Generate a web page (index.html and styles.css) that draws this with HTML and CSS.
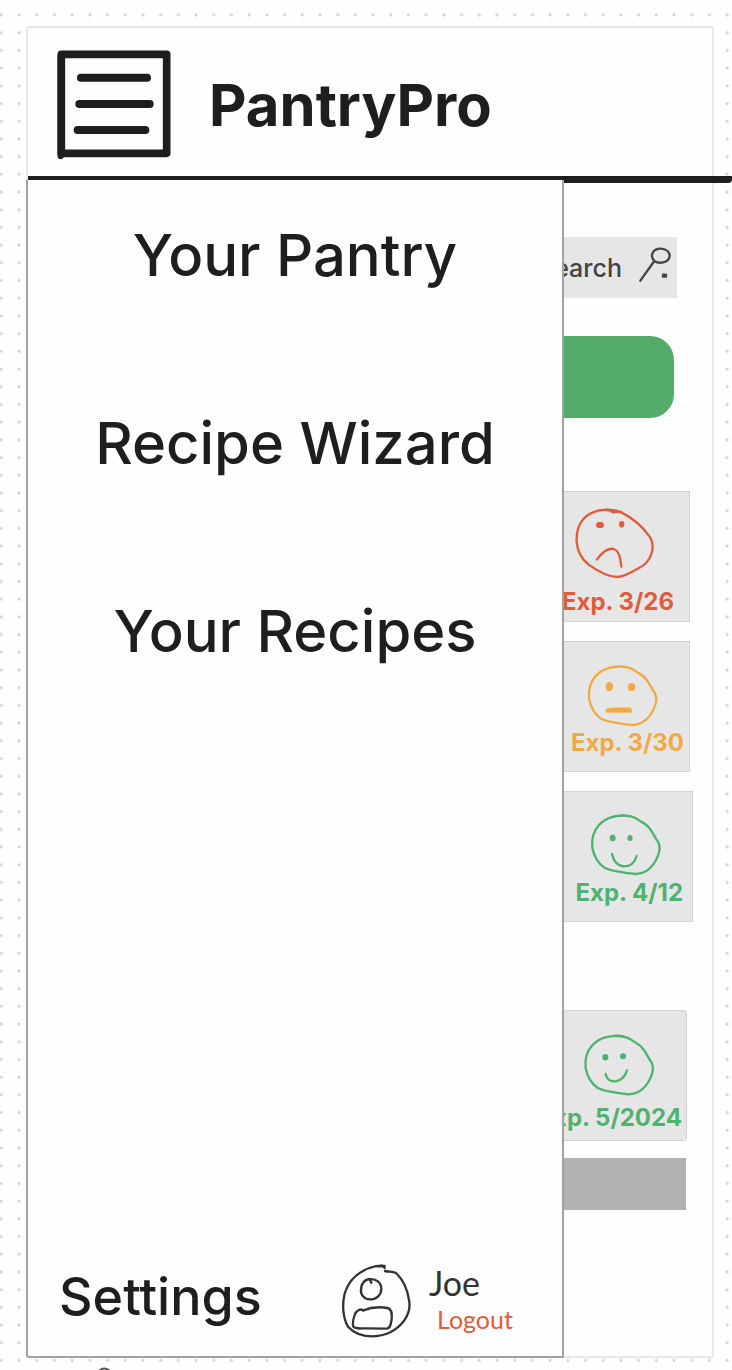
FILE: index.html
```html
<!DOCTYPE html>
<html lang="en">
<head>
<meta charset="utf-8">
<meta name="viewport" content="width=device-width, initial-scale=1">
<title>PantryPro</title>
<link rel="stylesheet" href="styles.css">
</head>
<body>
<div class="board">
  <div class="frame">
    <header class="header">
      <button class="menu-button" type="button" aria-label="Menu" aria-expanded="true">
        <svg viewBox="168 147 348 336" width="116" height="112" aria-hidden="true">
          <path d="M184 163H500V460H184Z" stroke-width="23"/>
          <path d="M182 170V468" stroke-width="19"/>
          <path d="M243 233H441M238 312H449M233 390H436" stroke-width="24"/>
        </svg>
      </button>
      <h1 class="brand">PantryPro</h1>
    </header>

    <main class="main">
      <label class="search">
        <input class="search-input" type="text" placeholder="Search">
        <svg viewBox="290 75 108 120" width="36" height="40" aria-hidden="true">
          <path d="M342 123C328 108 336 88 358 86C378 85 391 97 387 112C382 128 357 133 342 123L300 182"/>
          <path d="M368 164H377V170H368Z"/>
        </svg>
      </label>
      <button class="action" type="button" aria-label="Add"></button>

      <ul class="cards">
        <li class="card card-expired">
          <svg viewBox="39 36 378 282" width="126" height="94" aria-hidden="true">
            <path d="M213 95L190 97L178 91C145 85 112 101 97 121C80 143 79 165 80 185C82 213 95 238 116 254C141 272 176 291 202 291C226 290 244 276 267 264C291 252 299 237 304 222C311 200 309 185 299 170C278 141 246 113 215 98C199 90 187 88 168 89"/>
            <path d="M141 238C158 215 175 203 191 207C208 212 211 235 214 260"/>
            <ellipse class="fill" cx="150" cy="135" rx="12" ry="10"/>
            <ellipse class="fill" cx="215" cy="133" rx="8" ry="10"/>
          </svg>
          <span class="exp">Exp. 3/26</span>
        </li>
        <li class="card card-soon">
          <svg viewBox="39 36 378 255" width="126" height="85" aria-hidden="true">
            <path d="M225 111C190 105 157 117 137 138C119 158 115 181 117 206C121 228 134 252 153 266C174 277 213 281 246 285C275 284 296 267 310 239C319 221 322 205 315 190C306 178 300 163 290 150C279 132 265 131 253 121C238 112 217 108 199 110"/>
            <path d="M171 241C184 235 225 238 240 237M171 243L242 244" stroke-width="9"/>
            <ellipse class="fill" cx="178" cy="170" rx="11" ry="14"/>
            <ellipse class="fill" cx="245" cy="171" rx="11" ry="12"/>
          </svg>
          <span class="exp">Exp. 3/30</span>
        </li>
        <li class="card card-fresh">
          <svg viewBox="48 39 378 255" width="126" height="85" aria-hidden="true">
            <path d="M235 111C200 105 167 117 147 138C129 158 124 181 127 206C131 228 144 252 163 266C184 277 223 281 256 285C285 284 306 267 320 239C329 221 332 205 325 190C316 178 310 163 300 150C289 132 275 131 263 121C248 112 227 108 209 110"/>
            <path d="M186 225C191 247 204 261 223 262C243 262 255 248 260 231"/>
            <ellipse class="fill" cx="188" cy="177" rx="9" ry="10"/>
            <ellipse class="fill" cx="240" cy="177" rx="8" ry="9"/>
          </svg>
          <span class="exp">Exp. 4/12</span>
        </li>
        <li class="card card-stocked">
          <svg viewBox="30 33 378 273" width="126" height="91" aria-hidden="true">
            <path d="M215 109C180 103 147 115 127 136C109 156 104 179 107 204C111 226 124 250 143 264C164 275 203 279 236 283C265 282 286 265 300 237C309 219 312 203 305 188C296 176 290 161 280 148C269 130 255 129 243 119C228 110 207 106 189 108"/>
            <path d="M167 222C170 239 184 245 196 244C215 242 225 229 231 211"/>
            <ellipse class="fill" cx="166" cy="172" rx="9" ry="10"/>
            <ellipse class="fill" cx="219" cy="169" rx="9" ry="9"/>
          </svg>
          <span class="exp">Exp. 5/2024</span>
        </li>
      </ul>
      <div class="bar"></div>
    </main>

    <aside class="drawer">
      <nav class="nav">
        <a class="nav-link" href="#pantry">Your Pantry</a>
        <a class="nav-link" href="#wizard">Recipe Wizard</a>
        <a class="nav-link" href="#recipes">Your Recipes</a>
      </nav>
      <div class="account">
        <a class="settings" href="#settings">Settings</a>
        <svg class="avatar" viewBox="60 69 216 228" width="72" height="76" aria-hidden="true">
          <path d="M194 84L188 77C174 76 160 80 148 84C110 98 85 125 74 161C65 196 70 236 84 260C102 280 130 289 159 289C201 287 233 268 253 241C268 220 271 200 267 180C262 145 247 117 228 99C217 94 207 96 195 93M194 78L171 79"/>
          <path d="M154 128L148 117C132 120 124 132 123 148C121 165 133 178 151 178C170 178 184 164 184 147C184 128 168 115 148 118"/>
          <path d="M130 212C122 203 107 213 104 225C100 237 97 251 100 260C108 268 119 265 136 265L200 266C211 266 212 253 215 238C217 220 216 207 202 204C180 200 150 203 130 211"/>
        </svg>
        <div class="user">
          <span class="user-name">Joe</span>
          <a class="logout" href="#logout">Logout</a>
        </div>
      </div>
    </aside>
  </div>
  <svg class="scribble" viewBox="0 0 12 12" width="12" height="12" aria-hidden="true">
    <path d="M1 12Q5 9 10 12"/>
  </svg>
</div>
</body>
</html>
```
FILE: styles.css
```css
* {
  box-sizing: border-box;
}

body {
  margin: 0;
  background: #fefefe;
  color: #1e1e1e;
  font-family: Inter, "Liberation Sans", sans-serif;
}

a {
  color: inherit;
  text-decoration: none;
}

button {
  padding: 0;
  border: 0;
  background: none;
  color: inherit;
}

svg {
  display: block;
  flex: none;
  fill: none;
  stroke: currentColor;
  stroke-linecap: round;
  stroke-linejoin: round;
}

/* dotted canvas around the phone frame */
.board {
  display: flex;
  flex-direction: column;
  min-height: 100vh;
  overflow: hidden;
  padding: 26px 18px 0 26px;
  background-image: radial-gradient(circle at 2px 2px, #d2d2d2 1px, transparent 2px);
  background-origin: content-box;
  background-position: -9px -13px;
  background-size: calc((100% + 38px) / 41) calc((100% + 2px) / 76);
}

.frame {
  position: relative;
  display: flex;
  flex: 1;
  flex-direction: column;
  border: 2px solid #e8e8e8;
  border-radius: 3px;
  background: #fefefe;
}

.header {
  display: flex;
  align-items: center;
  gap: 37px;
  height: 155px;
  margin-right: -20px;
  padding: 6px 0 0 28px;
  border-bottom: 7px solid #1e1e1e;
  border-radius: 0 0 4px 4px;
}

.brand {
  margin: 0;
  font-size: 58px;
  font-weight: 700;
  line-height: 72px;
}

.main {
  display: flex;
  flex-direction: column;
  padding: 54px 0 0 35px;
}

.search {
  display: flex;
  align-items: center;
  justify-content: flex-end;
  gap: 13px;
  height: 61px;
  margin-right: 35px;
  padding: 0 4px;
  background: #e6e6e6;
  color: #444;
}

.search svg {
  margin-bottom: 6px;
  stroke-width: 7;
}

.search-input {
  width: 86px;
  padding: 0;
  border: 0;
  background: none;
  font: 500 25px/32px Inter, "Liberation Sans", sans-serif;
}

.search-input::placeholder {
  color: #444;
  opacity: 1;
}

.action {
  height: 82px;
  margin: 38px 38px 0 0;
  border-radius: 24px;
  background: #52ab67;
}

.cards {
  display: flex;
  flex-direction: column;
  gap: 19px;
  margin: 73px 0 0;
  padding: 0;
  list-style: none;
}

.card {
  display: flex;
  flex-direction: column;
  align-items: flex-end;
  height: 131px;
  margin-right: 22px;
  border: 1px solid #d2d2d2;
  background: #e6e6e6;
}

.card svg {
  stroke-width: 7;
}

.card .fill {
  fill: currentColor;
  stroke: none;
}

.exp {
  padding-right: 5px;
  font-size: 24px;
  font-weight: 700;
  line-height: 32px;
}

.card-expired {
  color: #e25b3a;
}

.card-expired .exp {
  padding-right: 15px;
}

.card-soon {
  color: #f2a942;
}

.card-fresh,
.card-stocked {
  color: #4eb36f;
}

.card-fresh {
  margin-right: 19px;
}

.card-fresh .exp {
  padding-right: 9px;
}

.card-stocked {
  margin: 69px 25px 0 0;
  border-radius: 3px;
}

.card-stocked .exp {
  padding-right: 4px;
}

.bar {
  height: 52px;
  margin: 17px 26px 0 0;
  background: #b2b2b2;
}

/* open menu, lying over the page */
.drawer {
  position: absolute;
  top: 152px;
  bottom: -2px;
  left: -2px;
  display: flex;
  flex-direction: column;
  justify-content: space-between;
  width: calc(100% - 146px);
  border: 2px solid #a2a2a2;
  border-top: 0;
  border-bottom-left-radius: 3px;
  background: #fefefe;
}

.nav {
  display: flex;
  flex-direction: column;
  align-items: center;
  gap: 116px;
  padding-top: 39px;
}

.nav-link {
  font-size: 58px;
  font-weight: 500;
  line-height: 72px;
}

.account {
  display: flex;
  align-items: center;
  padding: 0 0 17px 31px;
}

.settings {
  padding-bottom: 8px;
  font-size: 52px;
  font-weight: 500;
  line-height: 64px;
}

.avatar {
  margin-left: auto;
  color: #333;
  stroke-width: 7;
}

.user {
  display: flex;
  flex-direction: column;
  width: 150px;
  padding-left: 17px;
  font-family: Lato, "Liberation Sans", sans-serif;
  line-height: 36px;
}

.user-name {
  color: #333;
  font-size: 34px;
}

.logout {
  padding-left: 8px;
  color: #e25b3a;
  font-size: 25px;
}

.scribble {
  margin-left: 73px;
  color: #555;
  stroke-width: 2;
}
```
